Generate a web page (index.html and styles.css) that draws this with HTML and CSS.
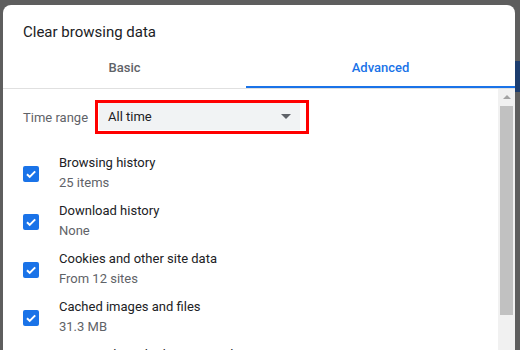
FILE: index.html
```html
<!DOCTYPE html>
<html lang="en">
<head>
    <meta charset="UTF-8">
    <title>Clear browsing data</title>
    <link rel="stylesheet" href="styles.css">
</head>
<body>
    <div class="dialog">
        <h2 class="dialog-title">Clear browsing data</h2>

        <div class="tabs">
            <div class="tab">Basic</div>
            <div class="tab active">Advanced</div>
        </div>

        <div class="dialog-body">
            <div class="body-content">
                <div class="time-range">
                    <span class="time-label">Time range</span>
                    <div class="highlight">
                        <div class="select">
                            <span>All time</span>
                            <span class="select-arrow"></span>
                        </div>
                    </div>
                </div>

                <ul class="data-list">
                    <li class="data-item">
                        <span class="checkbox"><svg viewBox="0 0 16 16"><path d="M4 8.3l2.7 2.6L12.2 5.4"/></svg></span>
                        <div class="item-text">
                            <div class="item-title">Browsing history</div>
                            <div class="item-sub">25 items</div>
                        </div>
                    </li>
                    <li class="data-item">
                        <span class="checkbox"><svg viewBox="0 0 16 16"><path d="M4 8.3l2.7 2.6L12.2 5.4"/></svg></span>
                        <div class="item-text">
                            <div class="item-title">Download history</div>
                            <div class="item-sub">None</div>
                        </div>
                    </li>
                    <li class="data-item">
                        <span class="checkbox"><svg viewBox="0 0 16 16"><path d="M4 8.3l2.7 2.6L12.2 5.4"/></svg></span>
                        <div class="item-text">
                            <div class="item-title">Cookies and other site data</div>
                            <div class="item-sub">From 12 sites</div>
                        </div>
                    </li>
                    <li class="data-item">
                        <span class="checkbox"><svg viewBox="0 0 16 16"><path d="M4 8.3l2.7 2.6L12.2 5.4"/></svg></span>
                        <div class="item-text">
                            <div class="item-title">Cached images and files</div>
                            <div class="item-sub">31.3 MB</div>
                        </div>
                    </li>
                    <li class="data-item">
                        <span class="checkbox"><svg viewBox="0 0 16 16"><path d="M4 8.3l2.7 2.6L12.2 5.4"/></svg></span>
                        <div class="item-text">
                            <div class="item-title">Passwords and other sign-in data</div>
                            <div class="item-sub">None</div>
                        </div>
                    </li>
                </ul>
            </div>

            <!-- fake scrollbar -->
            <div class="scrollbar">
                <span class="scroll-arrow"></span>
                <div class="scroll-thumb"></div>
            </div>
        </div>
    </div>
</body>
</html>
```

FILE: styles.css
```css
body {
    margin: 0;
    padding: 0;
    height: 350px;
    overflow: hidden;
    font-family: Roboto, 'Noto Sans', sans-serif;
    background: #5e5e5e linear-gradient(#1d3d6e, #1d3d6e) no-repeat right 0 top 61px / 5px 31px;
}

.dialog {
    margin: 5px 0 0 3px;
    width: 512px;
    height: 345px;
    background: white;
    border-radius: 8px 8px 0 0;
    overflow: hidden;
    display: flex;
    flex-direction: column;
}

.dialog-title {
    margin: 0;
    padding: 17px 20px 0;
    font-size: 15px;
    font-weight: 400;
    line-height: 20px;
    color: #202124;
}

.tabs {
    display: flex;
    border-bottom: 1px solid #e0e0e0;
}

.tab {
    width: 243px;
    padding: 18px 0 10px;
    line-height: 16px;
    font-size: 13px;
    font-weight: 500;
    text-align: center;
    color: #5f6368;
    border-bottom: 2px solid transparent;
}

.tab.active {
    flex: 1;
    color: #1a73e8;
    border-bottom-color: #1a73e8;
}

.dialog-body {
    flex: 1;
    display: flex;
    min-height: 0;
}

.body-content {
    flex: 1;
    padding: 11px 0 0 20px;
}

.time-range {
    display: flex;
    align-items: center;
    margin-bottom: 15px;
}

.time-label {
    width: 72px;
    font-size: 13px;
    color: #5f6368;
}

.highlight {
    border: 3px solid #ff0000;
    padding: 0 6px 1px 1px;
}

.select {
    width: 183px;
    height: 27px;
    padding: 0 9px;
    display: flex;
    align-items: center;
    justify-content: space-between;
    background: #f1f3f4;
    font-size: 13px;
    color: #202124;
}

.select-arrow {
    width: 0;
    height: 0;
    border-left: 5px solid transparent;
    border-right: 5px solid transparent;
    border-top: 5px solid #5f6368;
}

.data-list {
    list-style: none;
    margin: 0;
    padding: 0;
}

.data-item {
    display: flex;
    align-items: center;
    padding: 4px 0;
}

.checkbox {
    width: 16px;
    height: 16px;
    margin: 1px 20px 0 0;
    background: #1a73e8;
    border-radius: 2px;
    flex-shrink: 0;
}

.checkbox svg {
    display: block;
    width: 16px;
    height: 16px;
    fill: none;
    stroke: white;
    stroke-width: 2;
}

.item-title,
.item-sub {
    font-size: 13px;
    line-height: 20px;
}

.item-title {
    color: #202124;
}

.item-sub {
    color: #5f6368;
}

.scrollbar {
    width: 17px;
    background: #f1f1f1;
    display: flex;
    flex-direction: column;
    align-items: center;
}

.scroll-arrow {
    margin-top: 6px;
    width: 0;
    height: 0;
    border-left: 4px solid transparent;
    border-right: 4px solid transparent;
    border-bottom: 4px solid #a3a3a3;
}

.scroll-thumb {
    margin-top: 7px;
    width: 13px;
    height: 209px;
    background: #c1c1c1;
}
```
